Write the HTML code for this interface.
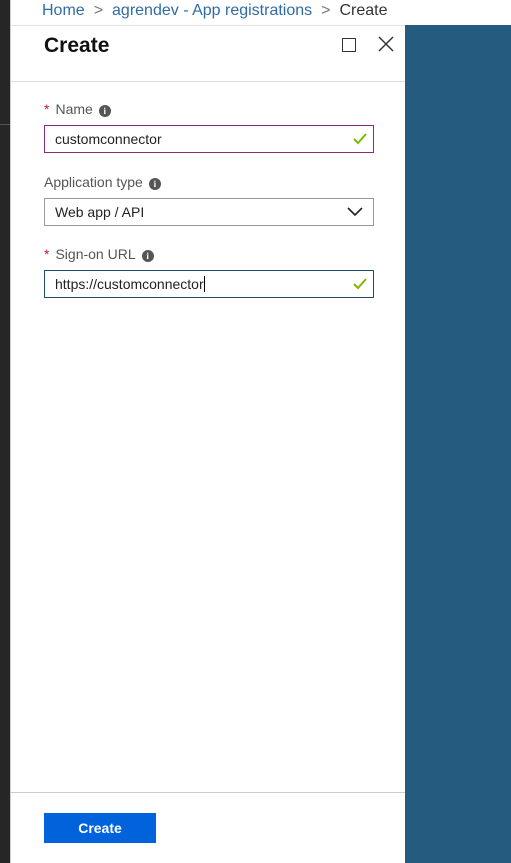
<!DOCTYPE html>
<html><head><style>
*{margin:0;padding:0;box-sizing:border-box}
body{width:511px;height:863px;position:relative;overflow:hidden;background:#fff;font-family:"Segoe UI","Liberation Sans",sans-serif}
.strip{position:absolute;left:0;top:0;width:10px;height:863px;background:#262626}
.strip2{position:absolute;left:0;top:124px;width:10px;height:1px;background:#555}
.panel{position:absolute;left:10px;top:0;width:395px;height:863px;background:#fff;border-left:1px solid #ccc}
.blue{position:absolute;left:405px;top:25px;width:106px;height:838px;background:#245b7e}
.bc{position:absolute;left:42px;top:1px;font-size:16px;color:#2f6ca5;line-height:20px;white-space:nowrap}
.bc .g{color:#777;margin:0 9px}
.bc .c{color:#333}
.hl{position:absolute;left:11px;top:25px;width:394px;height:1px;background:#e2e2e2}
h1{position:absolute;left:44px;top:34px;font-size:21px;font-weight:600;color:#111}
.sq{position:absolute;left:342px;top:38px;width:14px;height:14px;border:1.5px solid #333}
.x{position:absolute;left:378px;top:36px}
.hl2{position:absolute;left:11px;top:81px;width:394px;height:1px;background:#ddd}
.lbl{position:absolute;left:44px;font-size:14px;color:#555;white-space:nowrap}
.lbl .s{color:#c3163d;margin-right:6px}
.i{display:inline-block;width:12px;height:12px;border-radius:50%;background:#555;color:#fff;font-size:9px;font-weight:bold;text-align:center;line-height:12px;margin-left:6px;vertical-align:0px;font-family:"Liberation Serif",serif}
.inp{position:absolute;left:44px;width:330px;height:28px;border:1px solid #999;font-size:14px;color:#222;padding-left:10px;line-height:26px}
.ck{position:absolute;right:6px;top:7px}
.hl3{position:absolute;left:11px;top:792px;width:394px;height:1px;background:#ccc}
.btn{position:absolute;left:44px;top:813px;width:112px;height:30px;background:#0063db;color:#fff;font-size:14px;font-weight:600;text-align:center;line-height:30px}
</style></head><body>
<div class="strip"></div><div class="strip2"></div>
<div class="panel"></div>
<div class="blue"></div>
<div class="bc">Home<span class="g">&gt;</span>agrendev - App registrations<span class="g">&gt;</span><span class="c">Create</span></div>
<div class="hl"></div>
<h1>Create</h1>
<div class="sq"></div>
<svg class="x" width="16" height="16" viewBox="0 0 16 16"><path d="M1 1L15 15M15 1L1 15" stroke="#333" stroke-width="1.5"/></svg>
<div class="hl2"></div>
<div class="lbl" style="top:101px"><span class="s">*</span>Name<span class="i">i</span></div>
<div class="inp" style="top:125px;border-color:#8a2a7a">customconnector<svg class="ck" width="14" height="12" viewBox="0 0 14 12"><path d="M1 6L5 10L13 1" stroke="#7fba00" stroke-width="2" fill="none"/></svg></div>
<div class="lbl" style="top:174px">Application type<span class="i">i</span></div>
<div class="inp" style="top:198px">Web app / API<svg class="ck" width="16" height="10" viewBox="0 0 16 10" style="top:8px;right:10px"><path d="M1 1L8 8L15 1" stroke="#222" stroke-width="1.6" fill="none"/></svg></div>
<div class="lbl" style="top:246px"><span class="s">*</span>Sign-on URL<span class="i">i</span></div>
<div class="inp" style="top:270px;border-color:#1f4e6e">https://customconnector<span style="border-left:1px solid #000;margin-left:0"></span><svg class="ck" width="14" height="12" viewBox="0 0 14 12"><path d="M1 6L5 10L13 1" stroke="#7fba00" stroke-width="2" fill="none"/></svg></div>
<div class="hl3"></div>
<div class="btn">Create</div>
</body></html>
